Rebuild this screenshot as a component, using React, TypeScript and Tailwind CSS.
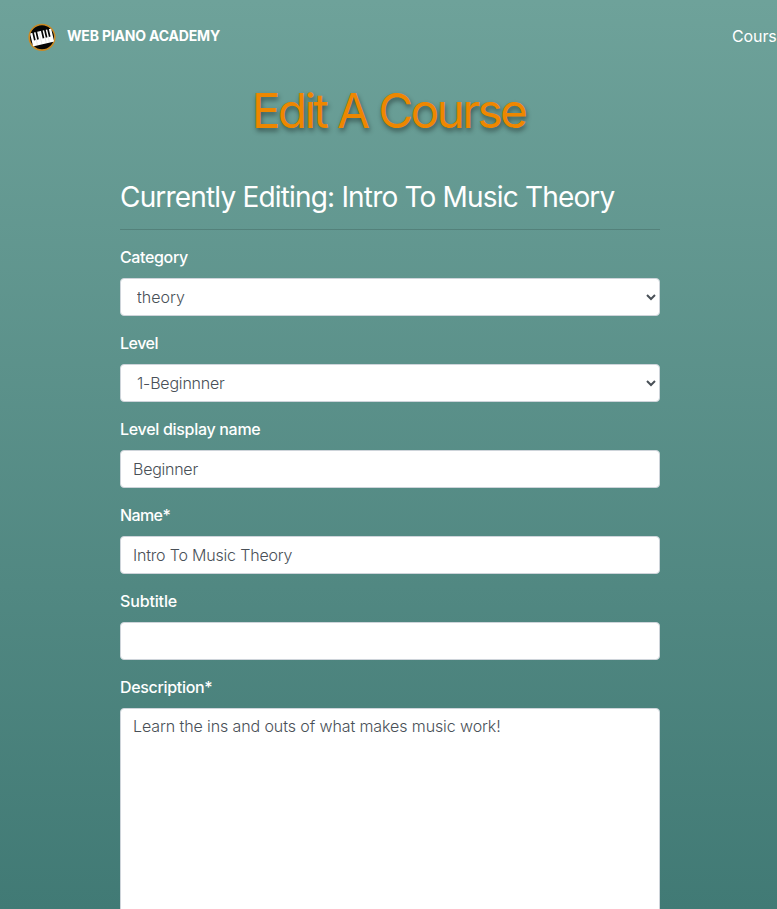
import { ReactNode } from 'react';

const control =
  'block h-[38px] w-full rounded-[4px] border border-[#ced4da] bg-white px-3 text-[16px] leading-6 font-light text-[#495057] outline-none';

function Logo() {
  return (
    <svg viewBox="0 0 28 28" className="h-7 w-7 shrink-0" aria-hidden="true">
      <circle cx="14" cy="14.3" r="12.8" fill="#050505" stroke="#c98a25" strokeWidth="1.6" />
      <g transform="rotate(-13 14 14)">
        <rect x="3.2" y="7.8" width="21.6" height="13.4" rx="0.8" fill="#fff" />
        <path d="M6.3 7v8.5M9.6 7v8.5M15.2 7v8.5M18.4 7v8.5M21.6 7v8.5" stroke="#050505" strokeWidth="1.7" />
        <path d="M7.8 15v5.5M12.3 9v11.5M16.8 15v5.5M20 15v5.5" stroke="#bbb" strokeWidth="0.3" />
      </g>
    </svg>
  );
}

function Field({ label, tracking, children }: { label: string; tracking: string; children: ReactNode }) {
  return (
    <div className="mb-4">
      <label className="-mt-px mb-[9px] block h-6 text-[16px] leading-6 font-medium text-white">
        <span className={tracking}>{label}</span>
      </label>
      {children}
    </div>
  );
}

export default function App() {
  return (
    <div className="h-[909px] w-full overflow-hidden bg-linear-to-b from-[#6ea29a] to-[#417a75] font-['Inter',sans-serif]">
      <header className="flex h-[73px] items-center pl-[28px]">
        <Logo />
        <span className="ml-[11px] pb-[3px] text-[14px] font-bold tracking-[-0.18px] whitespace-nowrap text-white">
          WEB PIANO ACADEMY
        </span>
        <span className="ml-auto w-[45px] shrink-0 overflow-hidden pb-0.5 text-[16px] tracking-[-0.1px] whitespace-nowrap text-white">
          Cours
        </span>
      </header>
      <h1 className="h-[76px] text-center text-[48px] leading-[76px] font-normal tracking-[-2.75px] text-[#ee8700] [text-shadow:1px_3px_5px_rgba(0,0,0,0.45)]">
        Edit A Course
      </h1>
      <main className="ml-[120px] w-[540px]">
        <h2 className="mt-[27px] h-[42px] text-[28px] leading-[42px] font-normal tracking-[-0.82px] whitespace-nowrap text-white">
          Currently Editing: Intro To Music Theory
        </h2>
        <hr className="mt-[11px] mb-4 border-t border-black/15" />
        <Field label="Category" tracking="tracking-[-0.36px]">
          <select className={control}>
            <option>theory</option>
          </select>
        </Field>
        <Field label="Level" tracking="tracking-[-0.5px]">
          <select className={`${control} tracking-[-0.2px]`}>
            <option>1-Beginnner</option>
          </select>
        </Field>
        <Field label="Level display name" tracking="tracking-[-0.3px]">
          <input className={`${control} tracking-[-0.25px]`} defaultValue="Beginner" />
        </Field>
        <Field label="Name*" tracking="tracking-[-0.6px]">
          <input className={`${control} tracking-[-0.19px]`} defaultValue="Intro To Music Theory" />
        </Field>
        <Field label="Subtitle" tracking="tracking-[-0.15px]">
          <input className={control} />
        </Field>
        <Field label="Description*" tracking="tracking-[-0.32px]">
          <textarea
            className="block h-[260px] w-full resize-none rounded-[4px] border border-[#ced4da] bg-white px-3 py-[5px] text-[16px] leading-6 font-light tracking-[-0.1px] text-[#495057] outline-none"
            defaultValue="Learn the ins and outs of what makes music work!"
          />
        </Field>
      </main>
    </div>
  );
}
